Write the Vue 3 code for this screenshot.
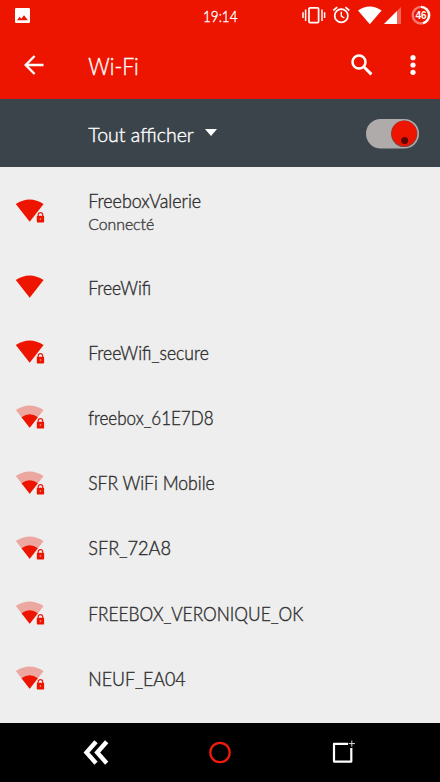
<script setup>
const networks = [
  { name: 'FreeboxValerie', status: 'Connecté', strong: true, locked: true, width: 113 },
  { name: 'FreeWifi', strong: true, locked: false, width: 63 },
  { name: 'FreeWifi_secure', strong: true, locked: true, width: 120.7 },
  { name: 'freebox_61E7D8', strong: false, locked: true, width: 125.3 },
  { name: 'SFR WiFi Mobile', strong: false, locked: true, width: 126.5 },
  { name: 'SFR_72A8', strong: false, locked: true, width: 82.8 },
  { name: 'FREEBOX_VERONIQUE_OK', strong: false, locked: true, width: 215 },
  { name: 'NEUF_EA04', strong: false, locked: true, width: 97.5 },
]
</script>

<template>
  <div class="phone">
    <header class="top">
      <div class="status-bar">
        <svg class="photo" viewBox="0 0 15 15"><rect width="15" height="15" rx="1.2" fill="#fff" /><path d="M2 12.2 4.6 8.8 6.3 10.8 9 7.3 13 12.2Z" fill="#ed1400" /></svg>
        <svg class="clock" viewBox="0 0 42 32"><text x="3" y="22" textLength="34.5" lengthAdjust="spacingAndGlyphs">19:14</text></svg>
        <svg class="indicators" viewBox="0 0 140 32">
          <g fill="none" stroke="#fff">
            <rect x="9" y="7.8" width="9.6" height="14.8" rx="1" stroke-width="1.7" />
            <path d="M5.6 9.5v11.4M3 12.3v5.8M22 9.5v11.4M24.6 12.3v5.8" stroke-width="1.5" />
            <circle cx="41.3" cy="15.8" r="6.6" stroke-width="1.7" />
            <path d="M41.3 11.8v4.3l3 1.9" stroke-width="1.4" />
            <path d="M33.3 10.5 37.2 7.2M45.4 7.2 49.3 10.5" stroke-width="1.7" />
          </g>
          <path d="M58 10.4Q69.8 2.8 81.6 10.4L69.8 24.2Z" fill="#fff" />
          <path d="M84 24 101 7V24Z" fill="#fff" opacity=".35" />
          <path d="M84 24 97 11V24Z" fill="#fff" />
          <circle cx="121" cy="15.2" r="8.3" fill="none" stroke="#f77a70" stroke-width="2.4" />
          <path d="M121 6.9A8.3 8.3 0 0 1 123 23.2" fill="none" stroke="#fff" stroke-width="2.4" />
          <text x="121" y="18.8" class="battery" text-anchor="middle">46</text>
        </svg>
      </div>
      <div class="app-bar">
        <svg class="back" viewBox="0 0 20 20"><path d="M19.5 10H2M10.6 1 1.7 10 10.6 19" fill="none" stroke="#fff" stroke-width="2.4" /></svg>
        <h1><svg class="title" viewBox="0 0 60 30"><text x="0.3" y="23.6" textLength="50.5" lengthAdjust="spacingAndGlyphs">Wi-Fi</text></svg></h1>
        <svg class="search" viewBox="0 0 22 22"><circle cx="8" cy="8" r="6.5" fill="none" stroke="#fff" stroke-width="2.5" /><path d="m12.8 12.8 7.6 7.6" stroke="#fff" stroke-width="3" /></svg>
        <svg class="more" viewBox="0 0 6 20"><g fill="#fff"><circle cx="3" cy="2.7" r="2.6" /><circle cx="3" cy="10" r="2.6" /><circle cx="3" cy="17.3" r="2.6" /></g></svg>
      </div>
    </header>

    <div class="filter">
      <svg class="filter-label" viewBox="0 0 110 30"><text x="0.3" y="23.6" textLength="105.5" lengthAdjust="spacingAndGlyphs">Tout afficher</text></svg>
      <svg class="caret" viewBox="0 0 12 7"><path d="M0 0h12L6 7Z" fill="#fff" /></svg>
      <svg class="toggle" viewBox="0 0 54 30">
        <rect width="53" height="29.5" rx="14.75" fill="#b0abab" />
        <circle cx="38.2" cy="14.8" r="13.2" fill="#7d4645" />
        <circle cx="38.2" cy="14.3" r="12.6" fill="#ed1400" />
        <circle cx="38.6" cy="21.5" r="3.5" fill="#5b0805" />
      </svg>
    </div>

    <main>
      <div v-for="net in networks" :key="net.name" class="row" :class="{ connected: net.status }">
        <svg class="signal" viewBox="0 0 30 24">
          <path d="M.8 5Q14.6-4.2 28.6 5L14.7 22.8Z" fill="#ed1400" :opacity="net.strong ? 1 : 0.32" />
          <path v-if="!net.strong" d="M6.5 12.3Q14.7 6.4 22.9 12.3L14.7 22.8Z" fill="#ed1400" />
          <g v-if="net.locked">
            <path d="M20.5 24V16.8L22.5 13H29.5V24Z" fill="#eee" />
            <path d="M23.2 17.5v-1.6a2.25 2.25 0 0 1 4.5 0v1.6" fill="none" stroke="#e5231b" stroke-width="1.2" />
            <rect x="21.8" y="16.7" width="7.3" height="6.7" rx=".7" fill="#ed1400" />
            <circle cx="25.45" cy="20" r=".8" fill="#f8aaa5" />
          </g>
        </svg>
        <div class="label">
          <svg class="name" viewBox="0 0 240 24"><text x="0.2" y="18.6" :textLength="net.width" lengthAdjust="spacingAndGlyphs">{{ net.name }}</text></svg>
          <svg v-if="net.status" class="state" viewBox="0 0 100 22"><text x="0.2" y="16.5" textLength="66" lengthAdjust="spacingAndGlyphs">{{ net.status }}</text></svg>
        </div>
      </div>
    </main>

    <nav>
      <svg viewBox="0 0 440 58">
        <path d="M96 18.8 86.5 29.5 96 40.2M106.7 18.8 97.2 29.5 106.7 40.2" fill="none" stroke="#fff" stroke-width="4.4" />
        <circle cx="220" cy="29.5" r="9.7" fill="none" stroke="#f01b0d" stroke-width="2.2" />
        <path d="M348 20.8H334V38.6H351.3V25" fill="none" stroke="#fff" stroke-width="2.2" stroke-linejoin="round" />
        <path d="M351.8 17.5v6.2M348.7 20.6h6.3" stroke="#ddd" stroke-width="1" />
      </svg>
    </nav>
  </div>
</template>

<style>
body { margin: 0; }
</style>

<style scoped>
.phone { width: 440px; height: 782px; display: flex; flex-direction: column; overflow: hidden; background: #eee; color: #303030; font-family: Lato, "Noto Sans", sans-serif; font-weight: 300; }
svg { display: block; flex: none; }
text { fill: currentColor; stroke: currentColor; stroke-width: 0.4px; }
.top { height: 99px; background: #ed1400; color: #fff; }
.status-bar { height: 32px; display: flex; align-items: flex-start; }
.photo { width: 15px; height: 15px; margin: 8px 0 0 15px; }
.clock { width: 42px; height: 32px; margin-left: 170px; font-size: 16.5px; overflow: visible; }
.indicators { width: 140px; height: 32px; margin-left: 58px; }
.battery { font: bold 10px "Liberation Sans", sans-serif; stroke: none; }
.app-bar { height: 67px; display: flex; align-items: center; }
.back { width: 20px; height: 20px; margin: 0 0 2px 24px; }
h1 { margin: 0 0 0 44px; font-size: 24px; font-weight: 300; }
.title { width: 60px; height: 30px; }
.search { width: 22px; height: 22px; margin: 0 0 2px 203px; }
.more { width: 6px; height: 20px; margin: 0 0 1px 37px; }
.filter { height: 68px; background: #3b444b; color: #fff; display: flex; align-items: center; }
.filter-label { width: 110px; height: 30px; margin-left: 88px; font-size: 20.5px; }
.caret { width: 12px; height: 7px; margin: 0 0 1px 7px; }
.toggle { width: 54px; height: 30px; margin-left: 149px; margin-top: 1px; }
main { height: 556px; overflow: hidden; }
.row { height: 65.2px; display: flex; align-items: center; }
.row.connected { height: 88px; }
.row.connected .label { padding-top: 1px; }
.signal { width: 30px; height: 24px; margin: 0 0 1px 15px; }
.label { margin-left: 43px; display: flex; flex-direction: column; }
.name { width: 240px; height: 24px; font-size: 19px; }
.state { width: 100px; height: 22px; font-size: 15.8px; color: #444; }
nav { height: 59px; background: #000; }
nav svg { width: 440px; height: 58px; }
</style>
